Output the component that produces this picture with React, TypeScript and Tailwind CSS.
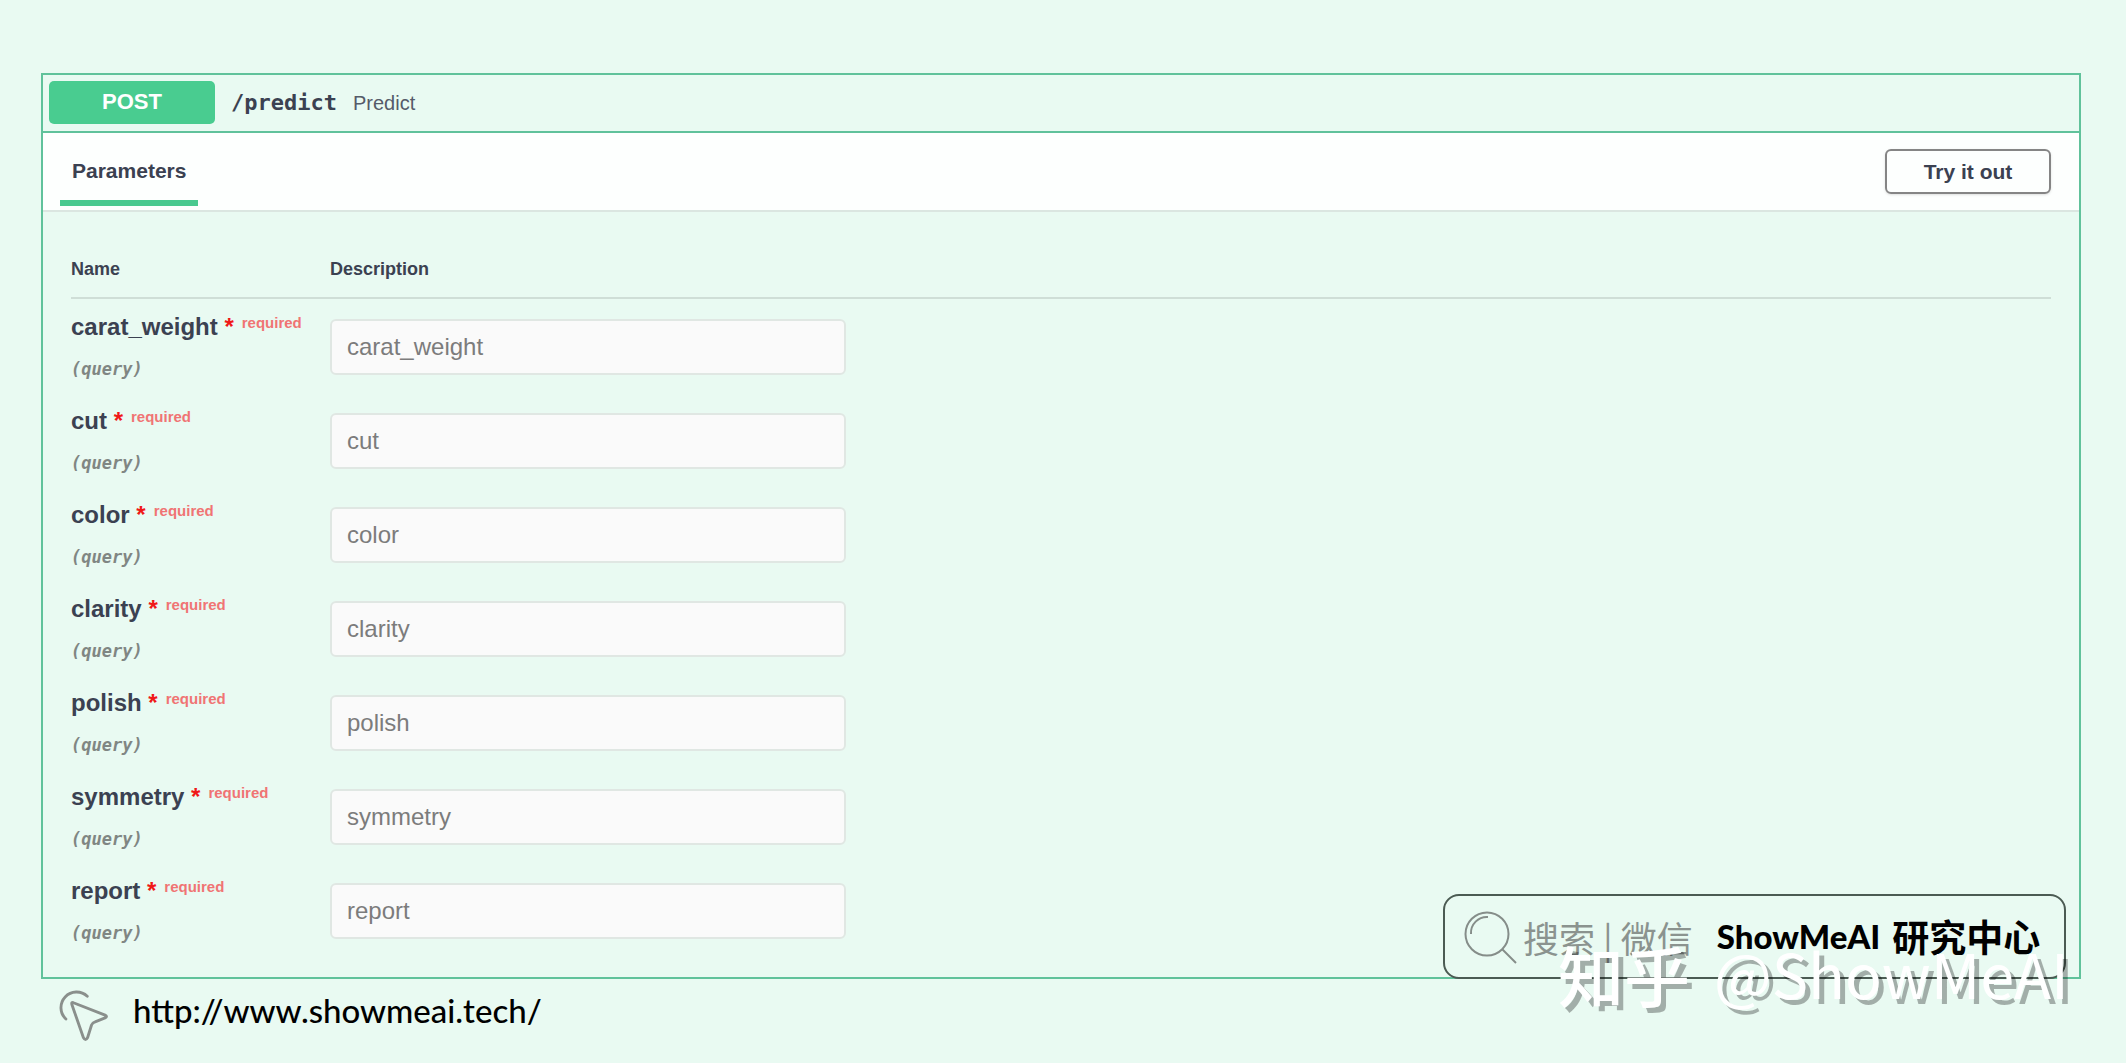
import React from 'react';

const params = ['carat_weight', 'cut', 'color', 'clarity', 'polish', 'symmetry', 'report'];

const CursorIcon: React.FC = () => (
    <svg width="52" height="56" viewBox="78 386 146 156" fill="none" stroke="#8a8f8c" strokeWidth="8" strokeLinecap="round" strokeLinejoin="round" aria-hidden="true">
        <path d="M163 414A42 42 0 1 0 103 478" />
        <path d="M126 433L213 467Q221 471 213 475L185 486Q178 488 175 495L164 530Q158 541 152 530L120 438Q117 429 126 433Z" />
    </svg>
);

const SearchIcon: React.FC = () => (
    <svg width="54" height="54" viewBox="0 0 54 54" fill="none" stroke="#858d89" strokeWidth="2" aria-hidden="true">
        <circle cx="24" cy="24" r="21.5" />
        <path d="M8 24A16 16 0 0 1 25 7" />
        <path d="M39 39L53 53" />
    </svg>
);

const ParamRow: React.FC<{ name: string }> = ({ name }) => (
    <tr>
        <td className="pt-2.5 align-top">
            <label htmlFor={name} className="block h-9 text-[24px] leading-[36px] font-bold whitespace-nowrap">
                {name}&nbsp;<span className="text-[#f01818]">*</span>
                <sup className="ml-2 text-[15px] leading-none text-[#f07474]">required</sup>
            </label>
            <div className="mt-3 h-9 font-['DejaVu_Sans_Mono',monospace] text-[17px] leading-6 font-bold text-[#808683] italic">(query)</div>
        </td>
        <td className="pt-5 align-top">
            <input
                id={name}
                type="text"
                placeholder={name}
                className="block h-14 w-[516px] max-w-full rounded-md border-2 border-[#e0e7e3] bg-[#fafafa] px-[15px] text-[24px] placeholder:text-[#7c7c7c]"
            />
        </td>
    </tr>
);

const App: React.FC = () => {
    return (
        <main className="relative min-h-screen bg-[#e9faf2] pt-[73px] pr-[45px] pl-[41px] font-['Liberation_Sans',Arial,sans-serif] text-[#3b4151]">
            <section className="relative border-2 border-[#60c29b]">
                {/* Summary */}
                <div className="flex items-center border-b-2 border-[#60c29b] px-1.5 pt-1.5 pb-[7px]">
                    <span className="h-[43px] w-[166px] rounded-[5px] bg-[#49cc90] text-center text-[22px] leading-[42px] font-bold text-white">POST</span>
                    <a href="#predict" className="ml-4 font-['DejaVu_Sans_Mono',monospace] text-[22px] font-bold">/predict</a>
                    <span className="ml-4 text-[20px] leading-[42px] text-[#555b69]">Predict</span>
                </div>

                {/* Section header */}
                <div className="flex justify-between border-b-2 border-[#dbe6e1] bg-[#fdfffe] pr-7 pl-[17px]">
                    <h4 className="mb-1 border-b-[6px] border-[#49c98f] px-3 pt-[22px] pb-[13px] text-[21px] leading-8 font-bold">Parameters</h4>
                    <button type="button" className="mt-4 h-[45px] w-[166px] rounded-md border-2 border-[#858585] text-[21px] leading-10 font-bold shadow-sm">Try it out</button>
                </div>

                <div className="px-7 pt-9 pb-5">
                    <table className="w-full table-fixed border-collapse text-left">
                        <thead>
                            <tr className="border-b-2 border-[#cfded7] text-[18px] leading-10">
                                <th className="w-[259px] pt-px pb-2 font-bold">Name</th>
                                <th className="pt-px pb-2 font-bold">Description</th>
                            </tr>
                        </thead>
                        <tbody>
                            {params.map((name) => (
                                <ParamRow key={name} name={name} />
                            ))}
                        </tbody>
                    </table>
                </div>

                {/* Search badge */}
                <div className="absolute right-[13px] -bottom-0.5 flex h-[85px] w-[623px] items-center rounded-2xl border-2 border-[#4b5b53] bg-[#e9faf2] pl-[18px] whitespace-nowrap text-black">
                    <SearchIcon />
                    <span className="ml-1.5 font-['Noto_Sans_CJK_SC',sans-serif] text-[36px] font-normal text-[#8b938f]">搜索 | 微信</span>
                    <span className="ml-6 font-['Lato',sans-serif] text-[33px] font-black">ShowMeAI</span>
                    <span className="ml-3 font-['Noto_Sans_CJK_SC',sans-serif] text-[37px] font-bold">研究中心</span>
                </div>
            </section>

            <footer className="flex items-start gap-6 pt-[7px] pl-4 text-black">
                <CursorIcon />
                <a href="http://www.showmeai.tech/" className="font-['Lato',sans-serif] text-[33px] leading-[48px] font-medium">http://www.showmeai.tech/</a>
            </footer>

            {/* Watermark */}
            <div className="absolute right-[57px] bottom-[50px] flex items-center gap-6 font-['Noto_Sans_CJK_SC',sans-serif] leading-[80px] whitespace-nowrap text-white [text-shadow:5px_5px_0_rgba(0,0,0,0.3)]">
                <span className="text-[66px] font-medium">知乎</span>
                <span className="text-[61px]">@ShowMeAI</span>
            </div>
        </main>
    );
};

export default App;
